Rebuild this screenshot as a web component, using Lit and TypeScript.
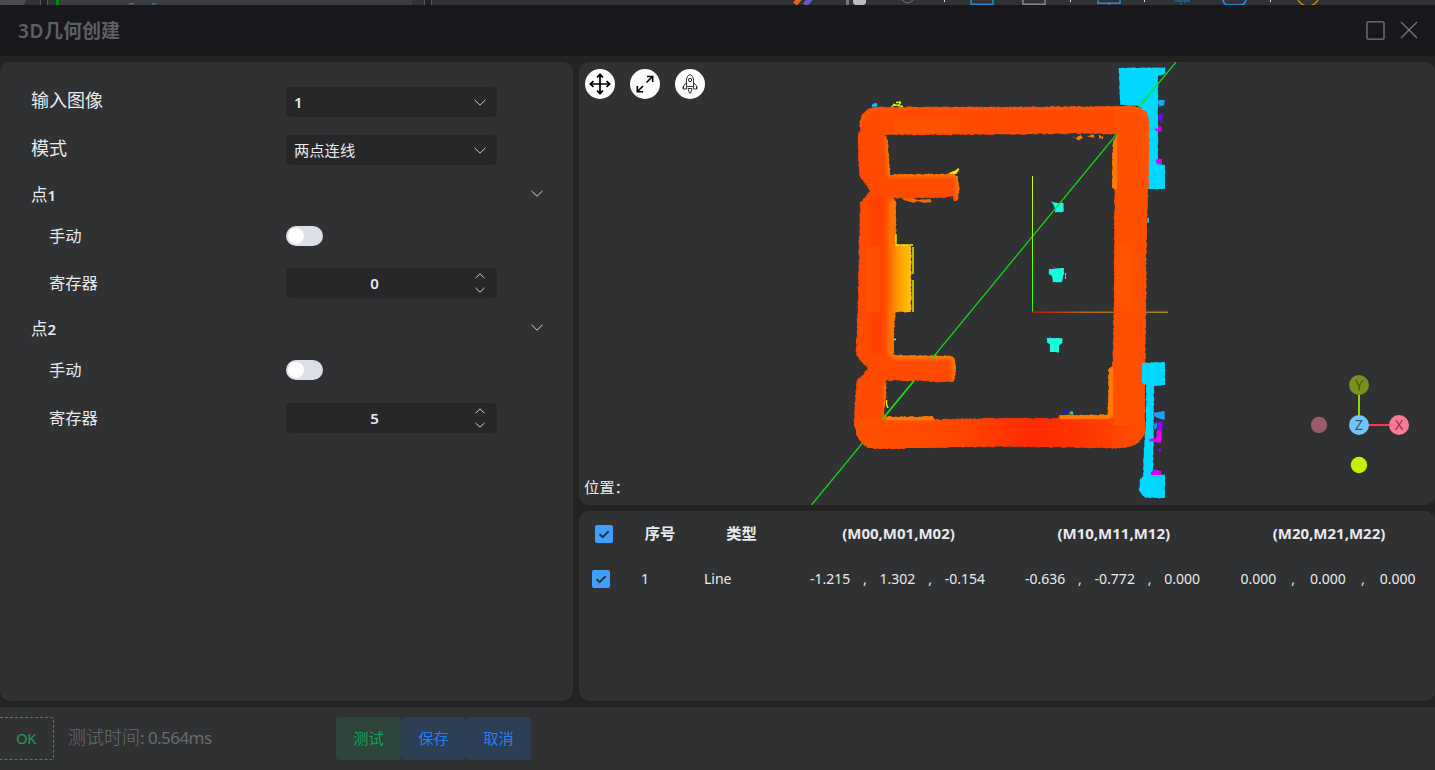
import { LitElement, html, svg, css } from "lit";
import { customElement, property } from "lit/decorators.js";

type Pt = [number, number];

/** Deterministic noise so the scanned contours always look the same. */
const noise = (seed: number) => {
  let s = seed;
  return () => {
    s = (s * 16807) % 2147483647;
    return s / 2147483647 - 0.5;
  };
};

/** Turns a clean polygon into the ragged contour of a depth scan. */
const ragged = (pts: Pt[], amp = 1.2, seed = 7): string => {
  const rnd = noise(seed);
  const out: string[] = [];
  pts.forEach(([x0, y0], i) => {
    const [x1, y1] = pts[(i + 1) % pts.length];
    const n = Math.max(1, Math.round(Math.hypot(x1 - x0, y1 - y0) / 1.6));
    for (let k = 0; k < n; k++) {
      const x = x0 + ((x1 - x0) * k) / n + rnd() * amp;
      const y = y0 + ((y1 - y0) * k) / n + rnd() * amp;
      out.push(`${x.toFixed(1)},${y.toFixed(1)}`);
    }
  });
  return "M" + out.join("L") + "Z";
};

const OUTER: Pt[] = [
  [860, 122], [862, 115], [868, 109], [877, 107], [1010, 107], [1080, 106.5], [1135, 106], [1142, 109],
  [1147, 114], [1149, 122], [1149, 150], [1148, 190], [1146, 260], [1146, 300], [1145, 380], [1145, 434],
  [1138, 443], [1128, 447], [1120, 448], [1010, 446.5], [960, 447], [900, 448.5], [870, 448.5], [862, 444],
  [856, 434], [854, 421], [855, 400], [857, 379], [861, 377], [868, 368], [860, 360], [856, 353], [858, 300],
  [859, 250], [860, 203], [870.5, 191], [860, 177], [858, 160], [858, 133], [860, 132],
];

const INNER: Pt[] = [
  [885, 135], [888, 141], [890, 174.5], [954, 174], [958, 177], [959.5, 188], [958, 200], [954, 201], [953, 197],
  [930, 198], [894, 198], [896, 204], [896, 245], [911, 246], [911, 312], [895, 312], [893.5, 355], [951, 356], [955, 359],
  [956, 370], [953.5, 382], [938, 382], [925, 381], [886, 380.5], [886, 396], [884, 417], [932, 416.5], [935, 419.5],
  [1010, 418], [1058, 418.5], [1060, 415.5], [1108, 415], [1108.5, 370], [1111, 367], [1112.5, 367], [1114, 300],
  [1114.5, 189], [1112, 188], [1113, 142], [1117, 134], [1080, 133.5], [1000, 134.5],
];

const CYAN_TOP: Pt[] = [
  [1119, 68], [1165, 67.5], [1165, 74], [1158, 76], [1158, 164], [1165, 165], [1165, 189], [1147, 189], [1140, 106], [1120, 105],
];
const CYAN_BOTTOM: Pt[] = [
  [1142, 363], [1165, 362], [1165, 385], [1154, 386], [1153, 475], [1165, 475], [1165, 498], [1145, 498], [1139, 491],
  [1140, 479], [1143.5, 476], [1143.5, 455], [1146, 420], [1146, 385], [1142, 382],
];
const CYAN_CORNER: Pt[] = [[1142, 363], [1152, 362.5], [1152, 385], [1146, 385], [1142, 382]];
const BITS: { pts: Pt[]; color: string }[] = [
  { color: "#14ffe0", pts: [[1051.5, 201.500], [1056, 203], [1063.5, 203], [1063.5, 212], [1055, 212.500], [1055, 208]] },
  { color: "#14ffe0", pts: [[1049, 269], [1064, 268], [1064, 273], [1062, 282], [1053, 282], [1052, 276], [1049, 274]] },
  { color: "#14ffe0", pts: [[1047, 338], [1062.5, 338], [1062, 343], [1059, 346], [1059, 352.500], [1050, 352], [1050, 345], [1047, 342]] },
  { color: "#14ffe0", pts: [[1065, 273], [1066, 273], [1066, 279], [1065, 279]] },
  { color: "#8a22d8", pts: [[1053, 267], [1055.5, 267], [1055.5, 268.5], [1053, 268.5]] },
  { color: "#8a22d8", pts: [[1049, 336.5], [1051, 336.5], [1051, 338], [1049, 338]] },
  { color: "#00c4ff", pts: [[873, 104], [877, 103], [877.500, 106], [873, 107.5], [871.5, 106]] },
  { color: "#18a8ff", pts: [[1158, 101], [1160, 99.5], [1165, 100], [1164, 105.500], [1159, 106.5]] },
  { color: "#7a00ff", pts: [[1158, 116], [1162.500, 112], [1162.5, 123], [1159, 121]] },
  { color: "#d800ff", pts: [[1154.500, 128], [1158, 129], [1158, 126], [1161.5, 127], [1161.5, 131.500], [1156, 131]] },
  { color: "#d800ff", pts: [[1156, 160], [1159, 158], [1162, 159], [1162, 164], [1157, 164]] },
  { color: "#1aa4ff", pts: [[1154, 413], [1159, 412], [1164.5, 411], [1165, 420], [1158, 418], [1154, 416]] },
  { color: "#1290ff", pts: [[1154, 424], [1157, 422], [1157, 428], [1154, 430]] },
  { color: "#9600ff", pts: [[1158, 422], [1163, 421], [1162, 432], [1157, 432]] },
  { color: "#e400ff", pts: [[1157, 431], [1162, 431], [1161, 443], [1155, 442], [1149, 441], [1150, 439], [1156, 438]] },
  { color: "#9600ff", pts: [[1158, 449], [1161, 449], [1161, 451.5], [1158, 451.5]] },
  { color: "#d400ff", pts: [[1151, 472], [1155, 469.5], [1161, 471], [1161.5, 475], [1151, 475]] },
  { color: "#1818ff", pts: [[1064, 411], [1067, 410], [1067, 413], [1064, 413.5]] },
  { color: "#10f070", pts: [[1070, 411.5], [1073, 411.5], [1073, 414.5], [1070, 414.5]] },
  { color: "#10d8e8", pts: [[1147.5, 218], [1149, 218], [1149, 223], [1147.5, 223]] },
  { color: "#ff7a00", pts: [[1071, 136], [1076, 138], [1081, 135], [1083, 138], [1078, 140.5], [1076, 138.5]] },
  { color: "#ff7a00", pts: [[1087, 136], [1094, 134.5], [1094, 138], [1090, 137]] },
  { color: "#ff7a00", pts: [[1099, 135], [1103, 137], [1103, 139], [1099, 138]] },
  { color: "#ff6400", pts: [[900, 197], [913, 198], [918, 200], [930, 199], [932, 202], [924, 203], [918, 201], [914, 203], [904, 200]] },
  { color: "#ffe000", pts: [[949, 173], [954, 171], [959, 168], [959, 170], [956, 174], [950, 174.5]] },
];

const SCENE = (() => {
  const frame = ragged(OUTER, 1.3, 11) + ragged(INNER, 1.3, 29);
  return svg`
    <defs>
      <clipPath id="frameClip"><path d=${frame} clip-rule="evenodd" /></clipPath>
      <filter id="soft" x="-20%" y="-20%" width="140%" height="140%"><feGaussianBlur stdDeviation="2" /></filter>
      <linearGradient id="bottomHeat" x1="860" x2="1145" y1="0" y2="0" gradientUnits="userSpaceOnUse">
        <stop offset="0" stop-color="#ff5000" /><stop offset=".35" stop-color="#ff4600" />
        <stop offset=".6" stop-color="#ff2a00" /><stop offset=".8" stop-color="#ff3600" /><stop offset="1" stop-color="#ff5000" />
      </linearGradient>
      <linearGradient id="ledge" x1="888" x2="913" y1="0" y2="0" gradientUnits="userSpaceOnUse">
        <stop offset="0" stop-color="#ff6400" /><stop offset=".4" stop-color="#ff9a00" /><stop offset="1" stop-color="#ffcc00" />
      </linearGradient>
      <linearGradient id="axisY" x1="0" x2="0" y1="176" y2="312" gradientUnits="userSpaceOnUse">
        <stop offset="0" stop-color="#d0ff00" /><stop offset="1" stop-color="#28ff00" />
      </linearGradient>
      <linearGradient id="axisX" x1="1032" x2="1168" y1="0" y2="0" gradientUnits="userSpaceOnUse">
        <stop offset="0" stop-color="#b81818" /><stop offset=".4" stop-color="#b86414" /><stop offset="1" stop-color="#a88a10" />
      </linearGradient>
    </defs>
    <path d=${ragged(CYAN_TOP, 0.8, 3)} fill="#00d8ff" />
    <path d=${ragged(CYAN_BOTTOM, 1, 5)} fill="#00d8ff" />
    ${BITS.map((b, i) => svg`<path d=${ragged(b.pts, 0.5, 40 + i)} fill=${b.color} />`)}
    <path d="M891 107l3-2 4 .5 3-3M893 104l5 1.500 5 1M896 102.500l5-.5" fill="none" stroke="#dff000" stroke-width="1.300" />
    <path d="M1176 62 811.500 505" stroke="#14e014" stroke-width="1.200" />
    <path d="M1032.500 176V312.500" stroke="url(#axisY)" />
    <path d="M1032 311.500H1168V313H1032Z" fill="url(#axisX)" />
    <path d=${frame} fill="#ff4a00" fill-rule="evenodd" />
    <g clip-path="url(#frameClip)">
      <path d="M850 418H1145V452H850Z" fill="url(#bottomHeat)" />
      <path d="M1114 107H1150V425H1114Z" fill="#ff5000" />
      <path d="M872 195H882V355H872Z" fill="#ff3c00" filter="url(#soft)" opacity=".7" />
      <g filter="url(#soft)" fill="none" stroke="#ff8200" stroke-width="5">
        <path d="M888 135 890 174 958 174 960 201M896 200V245M894 312V355L954 356 956 382M887 384V417H934M1060 415H1109V367M1112 188V136" />
        <path d="M892 173H950M895 356H948" stroke-width="6" />
        <path d="M859 128 862 115 876 107H1136L1149 118V200" stroke="#ff6000" stroke-width="3" />
      </g>
      <path d="M888 200H896V355H888Z" fill="#ff7600" filter="url(#soft)" />
      <path d="M892 245H913V313H892Z" fill="url(#ledge)" />
      <path d="M886 416H933V420H886ZM1060 414H1109V419H1060ZM1108 367H1113V417H1108ZM1111 136H1117V189H1111Z" fill="#ff7a00" />
      <path d="M894 117H960V133H894ZM866 247H880V312H866ZM1116 245H1132V311H1116Z" fill="#ff5800" opacity=".6" />
      <path d="M1114 312.500H1134V386H1114M1120 426V448" fill="none" stroke="#ff4000" opacity=".5" />
    </g>
    <path d=${ragged(CYAN_CORNER, 0.9, 17)} fill="#00d8ff" />
    <path d="M913 247V274M913 280V312M896 234V245H913" fill="none" stroke="#f4ee00" stroke-width="1.400" />
    <path d="M886.500 400V404L888 408M894 339.500H896" fill="none" stroke="#f0e800" stroke-width="1.500" />
    <path d="M936.500 353.500 932 359M914 381 882 420" stroke="#20d810" stroke-width="1.200" />
    <g stroke-width="2">
      <path d="M1359 394V416" stroke="#8adb00" /><path d="M1368 425H1390" stroke="#ff3352" />
    </g>
    <circle cx="1359" cy="385" r="10" fill="#7b8f1d" /><circle cx="1399" cy="425" r="10" fill="#ff7a95" />
    <circle cx="1359" cy="425" r="10" fill="#72c4ff" /><circle cx="1319" cy="425" r="8.200" fill="#9a5b6b" />
    <circle cx="1359" cy="465" r="8.200" fill="#c6f100" />
    <g class="axis-name" text-anchor="middle">
      <text x="1359" y="390" fill="#49541f">Y</text><text x="1359" y="430" fill="#2b5873">Z</text><text x="1399" y="430" fill="#83364a">X</text>
    </g>`;
})();

const chevron = (up = false) => html`<svg width="12" height="7" viewBox="0 0 12 7" fill="none" stroke="#cfd0d3">
  <path d=${up ? "M.5 6 6 .8 11.500 6" : "M.5 .8 6 6.200 11.500 .8"} /></svg>`;
const step = (up = false) => html`<svg width="10" height="6" viewBox="0 0 10 6" fill="none" stroke="#cfd0d3">
  <path d=${up ? "M.5 5.200 5 .8 9.500 5.200" : "M.5 .8 5 5.200 9.500 .8"} /></svg>`;

@customElement("form-row")
class FormRow extends LitElement {
  @property() label = "";
  @property({ type: Boolean, reflect: true }) sub = false;
  static styles = css`
    :host { display: flex; align-items: center; height: 48px; padding-left: 31px; }
    .label { width: 255px; font-size: 18px; line-height: 24px; padding-bottom: 5px; box-sizing: border-box; }
    :host([sub]) .label { font-size: 16.300px; padding-left: 18px; padding-bottom: 0; }
  `;
  render() {
    return html`<div class="label">${this.label}</div><slot></slot>`;
  }
}

@customElement("check-box")
class CheckBox extends LitElement {
  static styles = css`
    :host { display: block; width: 18px; height: 18px; }
    svg { display: block; }
  `;
  render() {
    return html`<svg width="18" height="18" viewBox="0 0 18 18"><rect width="18" height="18" rx="2" fill="#409eff" />
      <path d="M4.600 9.300 7.700 12.200 13.600 6.200" fill="none" stroke="#26313d" stroke-width="2" /></svg>`;
  }
}

@customElement("app-root")
class AppRoot extends LitElement {
  static styles = css`
    :host { display: flex; flex-direction: column; width: 1435px; height: 770px; overflow: hidden; background: #232323; color: #e8e9ec;
      font-family: "Noto Sans", "Noto Sans CJK SC", sans-serif; }
    svg { display: block; flex: none; }
    .behind { height: 5px; }
    .title { height: 51px; background: #18181c; display: flex; align-items: center; padding: 0 17px 0 18px; box-sizing: border-box; border-radius: 3px 3px 0 0; }
    .title h1 { flex: 1; margin: 0; font-size: 19px; font-weight: 700; color: #5e5f63; line-height: 26px; }
    .title h1 span { font-size: 19px; font-weight: 600; letter-spacing: .6px; }
    .title .window { display: flex; gap: 15px; }
    .main { display: grid; grid-template-columns: 573px 856px; gap: 6px; height: 639px; margin: 6px 0; }
    .panel { background: #303133; border-radius: 10px; overflow: hidden; }
    .form { padding-top: 16px; }
    .section { display: flex; justify-content: space-between; height: 40px; padding: 0 30px 0 31px; align-items: center; font-size: 16.500px; }
    .section .name { padding-bottom: 1px; }
    .section b, .field b { font-size: 15px; font-weight: 600; }
    .section .fold { padding-bottom: 2px; }
    .switches { height: 44px; }
    .reg1 { height: 50px; }
    .reg2 { height: 52px; }
    .field { display: flex; align-items: center; width: 211px; height: 30px; padding: 0 11px 0 8px; box-sizing: border-box; background: #27272a; border-radius: 5px; font-size: 15.300px; }
    .field .value { flex: 1; line-height: 22px; padding-bottom: 1px; }
    .number { padding: 0 12px 0 0; }
    .number .value { text-align: center; padding: 0 12px 0 0; }
    .number .value b { font-size: 15px; }
    .steps { display: flex; flex-direction: column; gap: 8px; }
    .switch { width: 37px; height: 20px; border-radius: 10px; background: #dcdfe6; padding: 2px; box-sizing: border-box; }
    .knob { width: 16px; height: 16px; border-radius: 50%; background: #fff; }
    .right { display: grid; grid-template-rows: 443px 190px; gap: 6px; }
    .view { position: relative; }
    .axis-name { font: 14.500px "Noto Sans", sans-serif; }
    .tools { position: absolute; left: 6px; top: 7px; display: flex; gap: 15px; }
    .tool { width: 30px; height: 30px; border-radius: 50%; background: #fff; }
    .position { position: absolute; left: 5px; bottom: 6px; font-size: 15.300px; line-height: 24px; }
    .cols { display: grid; grid-template-columns: 49px 64px 99px 215px 215.500px 215px; align-items: center; height: 45px; font-size: 14px; }
    .head { font-weight: 600; font-size: 15.300px; }
    .head .mid { text-align: center; padding-bottom: 3px; }
    .head .matrix { font-size: 15px; font-weight: 700; text-align: center; padding-bottom: 2px; }
    .head check-box { margin-left: 16px; }
    .body check-box { margin-left: 13px; }
    .body .index { padding-left: 13px; }
    .body .type { padding-left: 12px; }
    .body > div { padding-bottom: 1px; }
    .triple { display: flex; justify-content: space-between; width: 175px; margin-left: 19px; }
    .footer { display: flex; align-items: center; height: 63px; background: #303133; }
    .ok { width: 54px; height: 43px; box-sizing: border-box; border: 1px dashed #18a058; border-left: 0; border-radius: 0 3px 3px 0; color: #18a058;
      display: flex; align-items: center; justify-content: center; padding: 0 1px 2px 0; font-size: 14.500px; letter-spacing: -.3px; }
    .time { width: 267px; box-sizing: border-box; padding: 0 0 2px 14px; margin-right: 15px; font-size: 18px; font-weight: 300; color: #6a6b6e; line-height: 26px; }
    .time span { font-size: 17px; font-weight: 400; letter-spacing: -.55px; }
    .btn { width: 65px; height: 43px; border: 0; margin: 0; padding: 0 0 4px; border-radius: 4px; font: 15.300px "Noto Sans", "Noto Sans CJK SC", sans-serif; background: #2d3d54; color: #2080f0; }
    .run { background: #2c4439; color: #18a058; }
  `;

  private triple(values: string[]) {
    return html`<div class="triple">
      <span>${values[0]}</span><span>,</span><span>${values[1]}</span><span>,</span><span>${values[2]}</span>
    </div>`;
  }

  private point(name: string, register: number, rowClass: string) {
    return html`
      <div class="section"><span class="name">点<b>${name}</b></span><span class="fold">${chevron()}</span></div>
      <form-row class="switches" sub label="手动"><div class="switch"><div class="knob"></div></div></form-row>
      <form-row class=${rowClass} sub label="寄存器">
        <div class="field number"><span class="value"><b>${register}</b></span><span class="steps">${step(true)}${step()}</span></div>
      </form-row>`;
  }

  render() {
    return html`
      <svg class="behind" width="1435" height="5" viewBox="0 0 1435 5" fill="none">
        <path d="M0 0H1435V5H0Z" fill="#303234" /><path d="M0 0H26L24 5H0Z" fill="#4a4c51" />
        <path d="M41 0H47V5H41ZM425 0H431V5H425Z" fill="#222" /><path d="M40.500 0V5M47.500 0V5M424.500 0V5M431.500 0V5" stroke="#55575a" />
        <path d="M60 0H412V5H60Z" fill="#3b3d41" /><path d="M56 0H59V5H56Z" fill="#008a00" />
        <path d="M129.500 5V3.500H133V5M152.500 5V3.500H155.500V5" stroke="#2080c0" />
        <path d="M800-2 795 4" stroke="#e8601c" stroke-width="5" /><path d="M811-2 805 5" stroke="#6a5acd" stroke-width="5" />
        <path d="M847.500 0V5" stroke="#77797b" stroke-width="3" /><path d="M853 0H866V3L864 5H855L853 3Z" fill="#bcbcbc" />
        <circle cx="907.500" cy="-3" r="6" stroke="#77797b" />
        <path d="M944.500 0V2M1070.500 0V2M1144.500 0V2M1270.500 0V2" stroke="#ddd" />
        <path d="M971 0V4.300H993V0M1098 0V3.300H1120V0M1109 3V5" stroke="#1c8cd0" stroke-width="1.600" /><path d="M1023 0V4.300H1045V0" stroke="#85878a" stroke-width="1.500" />
        <path d="M1174 1H1190M1178 0V2M1181 0V5M1185 0V3M1188 0V2" stroke="#1a6ea4" />
        <path d="M1223 0Q1224 5 1228 5H1240Q1245 5 1246 0" stroke="#1c9ae0" stroke-width="1.600" /><circle cx="1308" cy="-5" r="11" stroke="#d88410" stroke-width="1.400" />
      </svg>
      <div class="title">
        <h1><span>3D</span>几何创建</h1>
        <div class="window">
          <svg width="19" height="19" viewBox="0 0 19 19" fill="none" stroke="#77787c" stroke-width="1.300"><rect x="1" y=".8" width="17" height="17.400" rx="1" /></svg>
          <svg width="18" height="18" viewBox="0 0 18 18" stroke="#77787c" stroke-width="1.300"><path d="M1 1 17 17M17 1 1 17" /></svg>
        </div>
      </div>
      <div class="main">
        <div class="panel form">
          <form-row label="输入图像"><div class="field"><span class="value"><b>1</b></span>${chevron()}</div></form-row>
          <form-row label="模式"><div class="field"><span class="value">两点连线</span>${chevron()}</div></form-row>
          ${this.point("1", 0, "reg1")} ${this.point("2", 5, "reg2")}
        </div>
        <div class="right">
          <div class="panel view">
            <svg width="856" height="443" viewBox="579 62 856 443">${SCENE}</svg>
            <div class="tools">
              <div class="tool"><svg width="30" height="30" viewBox="0 0 30 30" fill="none" stroke="#000" stroke-width="1.700">
                <path d="M15 5.500V24.500M5.500 15H24.500M12 8.500 15 5.300 18 8.500M12 21.500 15 24.700 18 21.500M8.500 12 5.300 15 8.500 18M21.500 12 24.700 15 21.500 18" /></svg></div>
              <div class="tool"><svg width="30" height="30" viewBox="0 0 30 30" fill="none" stroke="#000" stroke-width="1.600">
                <path d="M16.500 13.500 22.500 7.500M17 7.500H22.700V13M13 17 7.500 22.500M7.300 17V22.700H13" /></svg></div>
              <div class="tool"><svg width="30" height="30" viewBox="0 0 30 30" fill="none" stroke="#333" stroke-width="1">
                <path d="M11.500 17.500V10Q12 6.500 15 5.500 18 6.500 18.500 10V17.500ZM11.500 13.500 8.500 17V20M18.500 13.500 21.500 17V20M8 17.500V20H11.500V17.500M22 17.500V20H18.500V17.500M13 19.500 14 23 15 24.500 16 23 17 19.500Z" /><circle cx="15" cy="11" r="1.700" /></svg></div>
            </div>
            <div class="position">位置：</div>
          </div>
          <div class="panel">
            <div class="cols head">
              <check-box></check-box><div class="mid">序号</div><div class="mid">类型</div>
              <div class="matrix">(M00,M01,M02)</div><div class="matrix">(M10,M11,M12)</div><div class="matrix">(M20,M21,M22)</div>
            </div>
            <div class="cols body">
              <check-box></check-box><div class="index">1</div><div class="type">Line</div>
              ${this.triple(["-1.215", "1.302", "-0.154"])}${this.triple(["-0.636", "-0.772", "0.000"])}${this.triple(["0.000", "0.000", "0.000"])}
            </div>
          </div>
        </div>
      </div>
      <div class="footer">
        <div class="ok">OK</div>
        <div class="time">测试时间<span>: 0.564ms</span></div>
        <button class="btn run">测试</button><button class="btn">保存</button><button class="btn">取消</button>
      </div>`;
  }
}
